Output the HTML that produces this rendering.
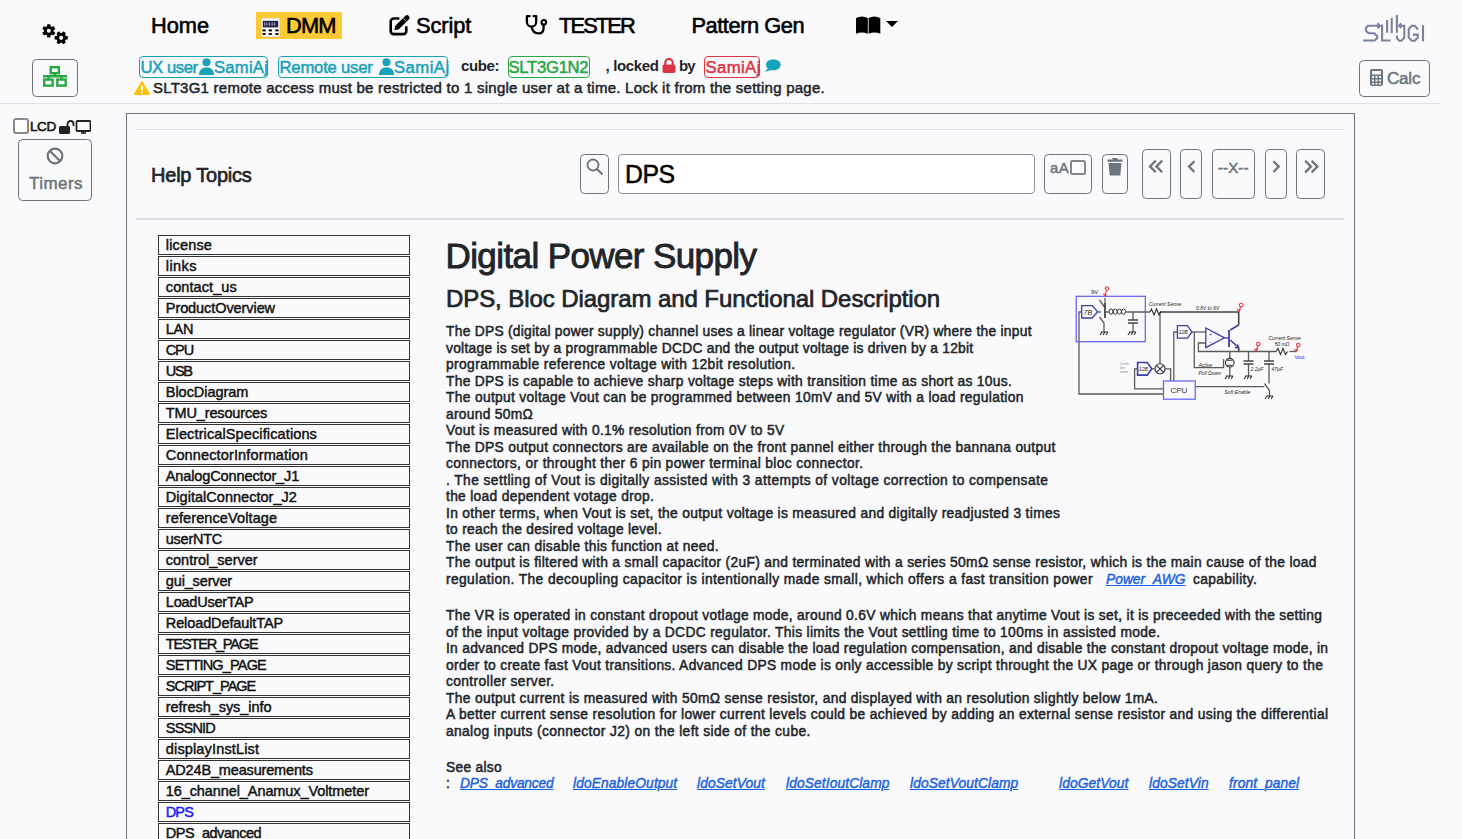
<!DOCTYPE html>
<html><head><meta charset="utf-8">
<style>
*{box-sizing:border-box}
html,body{margin:0;padding:0}
body{width:1462px;height:839px;overflow:hidden;background:#fafafc;font-family:"Liberation Sans",sans-serif;color:#212529;position:relative}
.a{position:absolute;white-space:nowrap}
.nav{font-size:21.8px;line-height:22px;color:#000;top:14.5px;-webkit-text-stroke:0.6px #000}
.md{-webkit-text-stroke:0.5px currentColor}
.bd{position:absolute;border:1px solid;border-radius:4px}
.bt{position:absolute;font-size:16.7px;line-height:20px;top:58px;white-space:nowrap;-webkit-text-stroke:0.5px currentColor}
.btn{position:absolute;border:1px solid #6c757d;border-radius:4.5px}
.hr{position:absolute;height:1px;background:#dee2e6}
#list{position:absolute;left:158px;top:235px;width:252px}
#list div{height:20px;border:1.5px solid #333;margin-bottom:1px;font-size:14.5px;line-height:17px;padding:1px 0 0 6.8px;color:#111;white-space:nowrap;letter-spacing:-0.05px;-webkit-text-stroke:0.45px currentColor}
.p{position:absolute;left:446px;font-size:13.8px;line-height:16.5px;color:#212529;white-space:nowrap;letter-spacing:0.28px;-webkit-text-stroke:0.5px currentColor}
.lk{color:#1d63dc;font-style:italic;text-decoration:underline;-webkit-text-stroke:0.45px currentColor}
.sl{position:absolute;top:775.6px;font-size:13.8px;line-height:16.5px;letter-spacing:0.1px;white-space:nowrap}
</style></head><body>
<!-- gears -->
<svg class="a" style="left:41px;top:23px" width="28" height="23" viewBox="0 0 28 23">
  <g fill="#000"><g transform="translate(7.8 7.8)"><circle r="4.9"/><rect x="-1.7" y="-6.6" width="3.4" height="13.2" rx="0.6" transform="rotate(0)"/><rect x="-1.7" y="-6.6" width="3.4" height="13.2" rx="0.6" transform="rotate(60)"/><rect x="-1.7" y="-6.6" width="3.4" height="13.2" rx="0.6" transform="rotate(120)"/></g><g transform="translate(20.2 14.8)"><circle r="4.9"/><rect x="-1.7" y="-6.6" width="3.4" height="13.2" rx="0.6" transform="rotate(30)"/><rect x="-1.7" y="-6.6" width="3.4" height="13.2" rx="0.6" transform="rotate(90)"/><rect x="-1.7" y="-6.6" width="3.4" height="13.2" rx="0.6" transform="rotate(150)"/></g></g>
  <circle cx="7.8" cy="7.8" r="2" fill="#fafafc"/>
  <circle cx="20.2" cy="14.8" r="2.1" fill="#fafafc"/>
</svg>

<!-- nav -->
<div class="a nav" style="left:151px">Home</div>
<div class="a" style="left:256px;top:12px;width:86px;height:27px;background:#fdc935"></div>
<svg class="a" style="left:261px;top:18px" width="19" height="19" viewBox="0 0 19 19">
  <rect x="0.2" y="0.2" width="18.6" height="18.6" fill="#fff" stroke="#c4c4d8" stroke-width="0.5"/>
  <rect x="1.8" y="2.8" width="15.4" height="6.6" fill="#1d1d45"/>
  <g fill="#b8b8d0"><rect x="3" y="4" width="0.6" height="4.2"/><rect x="5.6" y="4" width="0.6" height="4.2"/><rect x="8.2" y="4" width="0.6" height="4.2"/><rect x="10.8" y="4" width="0.6" height="4.2"/><rect x="13.4" y="4" width="0.6" height="4.2"/><rect x="3" y="5.8" width="12" height="0.5"/></g>
  <g fill="#000"><ellipse cx="3.1" cy="12.4" rx="1.9" ry="1.05"/><ellipse cx="9.3" cy="12.4" rx="1.9" ry="1.05"/><ellipse cx="15.9" cy="12.4" rx="1.9" ry="1.05"/>
  <ellipse cx="3.1" cy="16" rx="1.9" ry="1.05"/><ellipse cx="9.3" cy="16" rx="1.9" ry="1.05"/><ellipse cx="15.9" cy="16" rx="1.9" ry="1.05"/></g>
</svg>
<div class="a nav" style="left:286px;letter-spacing:-0.8px">DMM</div>
<svg class="a" style="left:388px;top:15px" width="23" height="22" viewBox="0 0 23 22">
  <path d="M10.3 3.5H5.7a3 3 0 0 0-3 3v9.6a3 3 0 0 0 3 3h9.6a3 3 0 0 0 3-3V12.3" fill="none" stroke="#000" stroke-width="2.6" stroke-linecap="round"/>
  <path d="M6.3 15.2l1-4.4 9.9-9.9a2.5 2.5 0 0 1 3.55 3.55l-9.9 9.9z" fill="#000"/>
  <path d="M14.9 2.9l3.6 3.6" stroke="#fafafc" stroke-width="0.6"/>
</svg>
<div class="a nav" style="left:416px;letter-spacing:-0.1px">Script</div>
<svg class="a" style="left:524px;top:15px" width="24" height="22" viewBox="0 0 24 22">
  <path d="M5.6 1.2H2.9v5.8a4.65 4.65 0 0 0 9.3 0V1.2H9.6" fill="none" stroke="#000" stroke-width="2.3" stroke-linecap="round" stroke-linejoin="round"/>
  <path d="M7.6 11.6C8.3 16.3 11.4 18.4 14.6 18.4S19.6 16.2 19.6 13V9.6" fill="none" stroke="#000" stroke-width="2.3"/>
  <circle cx="19.8" cy="7.3" r="2.3" fill="none" stroke="#000" stroke-width="2.1"/>
</svg>
<div class="a nav" style="left:559px;letter-spacing:-1.85px">TESTER</div>
<div class="a nav" style="left:691.5px;letter-spacing:-0.45px">Pattern Gen</div>
<svg class="a" style="left:856px;top:16px" width="43" height="19" viewBox="0 0 43 19">
  <path d="M0 2Q6 -1 11.8 2V17.8Q6 15.2 0 17.8z" fill="#000"/>
  <path d="M12.6 2Q18.4 -1 24.3 2V17.8Q18.4 15.2 12.6 17.8z" fill="#000"/>
  <path d="M30 5h12l-6 6z" fill="#000"/>
</svg>
<!-- logo -->
<svg class="a" style="left:1358px;top:10px" width="72" height="36" viewBox="0 0 72 36">
  <g fill="none" stroke="#7a839b" stroke-width="2.1" stroke-linejoin="miter">
    <path d="M21.2 15.8H9.9L7.9 18.2v2.5l2.9 2.5h5.5l2.9 2.9v2l-2.5 2.4H5.2"/>
    <path d="M19.5 13.3l2.4 2.5-2.4 2.5"/>
    <path d="M24.1 14.6v15.9h8.5"/>
    <path d="M29.1 10.1v12.7M33.7 7.7v15.6M38.9 5v17.8"/>
    <path d="M41.8 15.8h4.5v12l-3 3h-2l-2.4-2.5v-2.7"/>
    <path d="M43.3 13.5l-2.2 2.3 2.2 2.3"/>
    <path d="M60 19.5l-3.2-3.7h-3.1l-3 3.1v8.8l3 3.1h3l3.1-3.1v-3.1h-5.1"/>
    <path d="M65 15.2v16.2"/>
  </g>
</svg>

<!-- calc -->
<div class="btn" style="left:1359px;top:60px;width:71px;height:37px"></div>
<svg class="a" style="left:1370px;top:69px" width="13" height="17" viewBox="0 0 13 17">
  <rect x="0" y="0" width="13" height="17" rx="2" fill="#6c757d"/>
  <rect x="2" y="2" width="9" height="3.5" fill="#fafafc"/>
  <g fill="#fafafc"><rect x="2" y="7" width="2" height="2"/><rect x="5.5" y="7" width="2" height="2"/><rect x="9" y="7" width="2" height="2"/>
  <rect x="2" y="10.5" width="2" height="2"/><rect x="5.5" y="10.5" width="2" height="2"/><rect x="9" y="10.5" width="2" height="2"/>
  <rect x="2" y="14" width="2" height="1.5"/><rect x="5.5" y="14" width="2" height="1.5"/><rect x="9" y="14" width="2" height="1.5"/></g>
</svg>
<div class="a md" style="left:1387px;top:70px;font-size:17px;line-height:17px;color:#6c757d;letter-spacing:-0.2px">Calc</div>

<!-- network button -->
<div class="btn" style="left:32px;top:59px;width:46px;height:38px"></div>
<svg class="a" style="left:42px;top:66px" width="26" height="21" viewBox="0 0 26 21">
  <g fill="none" stroke="#28a745" stroke-width="2.4">
    <rect x="8.7" y="1.2" width="8.2" height="6"/>
    <path d="M12.8 7.2v3.1M1 10.3h24M6.5 10.3v3.2M19.5 10.3v3.2"/>
    <rect x="2.2" y="13.6" width="8.4" height="6"/>
    <rect x="15.3" y="13.6" width="8.4" height="6"/>
  </g>
</svg>


<!-- badges row -->
<div class="bd" style="left:139px;top:56px;width:129px;height:22px;border-color:#17a2b8"></div>
<div class="bt" style="left:140.5px;color:#17a2b8;letter-spacing:-0.45px">UX user</div>
<svg class="a" style="left:199px;top:58px" width="15" height="17" viewBox="0 0 15 17"><circle cx="7.5" cy="4.3" r="4" fill="#17a2b8"/><path d="M0 17c0-5 2.8-7.6 7.5-7.6S15 12 15 17z" fill="#17a2b8"/></svg>
<div class="bt" style="left:214px;color:#17a2b8;letter-spacing:0.2px">SamiAj</div>
<div class="bd" style="left:278px;top:56px;width:170px;height:22px;border-color:#17a2b8"></div>
<div class="bt" style="left:279.5px;color:#17a2b8;letter-spacing:-0.22px">Remote user</div>
<svg class="a" style="left:378.5px;top:58px" width="15" height="17" viewBox="0 0 15 17"><circle cx="7.5" cy="4.3" r="4" fill="#17a2b8"/><path d="M0 17c0-5 2.8-7.6 7.5-7.6S15 12 15 17z" fill="#17a2b8"/></svg>
<div class="bt" style="left:394px;color:#17a2b8;letter-spacing:0.45px">SamiAj</div>
<div class="a" style="left:461px;top:57px;font-size:15px;line-height:17px;font-weight:bold;color:#212529;letter-spacing:-0.35px">cube:</div>
<div class="bd" style="left:508px;top:56px;width:82px;height:22px;border-color:#28a745"></div>
<div class="bt" style="left:508.5px;color:#28a745;letter-spacing:-0.3px">SLT3G1N2</div>
<div class="a" style="left:605.5px;top:57px;font-size:15px;line-height:17px;font-weight:bold;color:#212529;letter-spacing:-0.35px">, locked</div>
<svg class="a" style="left:662px;top:58px" width="14" height="15" viewBox="0 0 14 15">
  <path d="M3.3 7V4.7a3.7 3.7 0 0 1 7.4 0V7" fill="none" stroke="#dc3545" stroke-width="2.2"/>
  <rect x="0.5" y="6.5" width="13" height="8.5" rx="1.8" fill="#dc3545"/>
</svg>
<div class="a" style="left:679px;top:57px;font-size:15px;line-height:17px;font-weight:bold;color:#212529;letter-spacing:-0.9px">by</div>
<div class="bd" style="left:704px;top:56px;width:56px;height:22px;border-color:#dc3545"></div>
<div class="bt" style="left:705.5px;color:#dc3545;letter-spacing:0.4px">SamiAj</div>
<svg class="a" style="left:765px;top:59px" width="16" height="14" viewBox="0 0 16 14">
  <ellipse cx="8.3" cy="5.8" rx="7.4" ry="5.6" fill="#17a2b8"/>
  <path d="M3 9l-3 4 6-2z" fill="#17a2b8"/>
</svg>
<svg class="a" style="left:134px;top:81px" width="16" height="14" viewBox="0 0 16 14">
  <path d="M8 0.8L15.3 13.2H0.7z" fill="#ffc107" stroke="#ffc107" stroke-width="1.4" stroke-linejoin="round"/>
  <rect x="7.1" y="4.5" width="1.8" height="5" fill="#fff"/><rect x="7.1" y="10.5" width="1.8" height="1.8" fill="#fff"/>
</svg>
<div class="a md" style="left:153px;top:80px;font-size:15px;line-height:16px;color:#212529;letter-spacing:0.24px">SLT3G1 remote access must be restricted to 1 single user at a time. Lock it from the setting page.</div>

<div class="hr" style="left:0;top:103px;width:1440px"></div>

<!-- sidebar -->
<div class="a" style="left:13px;top:118px;width:16px;height:16px;border:2px solid #8a8a8f;border-radius:3px;background:#fff"></div>
<div class="a" style="left:30px;top:120px;font-size:13.5px;line-height:14px;color:#111;letter-spacing:-0.4px;-webkit-text-stroke:0.55px #111">LCD</div>
<svg class="a" style="left:59px;top:120px" width="32" height="14" viewBox="0 0 32 14">
  <path d="M8.5 7V4a3 3 0 0 1 6 0v2" fill="none" stroke="#222" stroke-width="1.8"/>
  <rect x="0" y="6" width="11" height="8" rx="1.5" fill="#222"/>
  <rect x="17.5" y="1" width="14" height="10" rx="1" fill="none" stroke="#222" stroke-width="1.8"/>
  <path d="M22 13h5" stroke="#222" stroke-width="1.6"/><path d="M24.5 11v2" stroke="#222" stroke-width="1.6"/>
</svg>
<div class="btn" style="left:18px;top:139px;width:74px;height:62px"></div>
<svg class="a" style="left:46px;top:147px" width="18" height="18" viewBox="0 0 18 18">
  <circle cx="9" cy="9" r="7.3" fill="none" stroke="#6c757d" stroke-width="2.2"/>
  <path d="M4 4l10 10" stroke="#6c757d" stroke-width="2.2"/>
</svg>
<div class="a md" style="left:29px;top:174.5px;font-size:17px;line-height:17px;color:#6c757d;letter-spacing:0.45px">Timers</div>
<!-- main panel -->
<div class="a" style="left:126px;top:113px;width:1229px;height:760px;border:1px solid #6c757d;border-bottom:none"></div>
<div class="hr" style="left:136px;top:129px;width:1208px"></div>
<div class="a" style="left:151px;top:164.5px;font-size:20px;line-height:20px;color:#212529;letter-spacing:-0.22px;-webkit-text-stroke:0.65px #212529">Help Topics</div>
<div class="btn" style="left:580px;top:154px;width:29px;height:40px"></div>
<svg class="a" style="left:586px;top:158px" width="18" height="18" viewBox="0 0 18 18">
  <circle cx="7" cy="7" r="5.5" fill="none" stroke="#6c757d" stroke-width="1.8"/>
  <path d="M11 11l5.5 5.5" stroke="#6c757d" stroke-width="2"/>
</svg>
<div class="a" style="left:618px;top:154px;width:417px;height:40px;background:#fff;border:1px solid #8a8f98;border-radius:4px"></div>
<div class="a md" style="left:624.5px;top:162px;font-size:25.7px;line-height:24px;color:#000;letter-spacing:-0.5px;transform:scaleX(0.965);transform-origin:0 0">DPS</div>
<div class="btn" style="left:1044px;top:154px;width:48px;height:40px"></div>
<div class="a md" style="left:1050px;top:161px;font-size:15px;line-height:14px;color:#6c757d;letter-spacing:0.3px">aA</div>
<div class="a" style="left:1070px;top:159.5px;width:15.5px;height:15.5px;border:2px solid #85858f;border-radius:2.5px;background:#fff"></div>
<div class="btn" style="left:1102px;top:154px;width:26px;height:40px"></div>
<svg class="a" style="left:1107px;top:158px" width="16" height="18" viewBox="0 0 16 18">
  <rect x="0.5" y="1.5" width="15" height="2.3" rx="0.5" fill="#6c757d"/>
  <rect x="5.5" y="0" width="5" height="2" fill="#6c757d"/>
  <path d="M1.5 5h13l-1.2 12.5h-10.6z" fill="#6c757d"/>
</svg>
<div class="btn" style="left:1142px;top:149px;width:29px;height:50px"></div>
<div class="btn" style="left:1180px;top:149px;width:22px;height:50px"></div>
<div class="btn" style="left:1212px;top:149px;width:43px;height:50px"></div>
<div class="btn" style="left:1265px;top:149px;width:22px;height:50px"></div>
<div class="btn" style="left:1296px;top:149px;width:29px;height:50px"></div>
<svg class="a" style="left:1142px;top:149px" width="183" height="30" viewBox="0 0 183 30">
  <g fill="none" stroke="#6c757d" stroke-width="2.3" stroke-linecap="butt">
    <path d="M13.8 11.6l-5.8 5.8 5.8 5.8"/><path d="M20.2 11.6l-5.8 5.8 5.8 5.8"/>
    <path d="M52.4 12.2l-5.4 5.4 5.4 5.4"/>
    <path d="M131.4 12.2l5.4 5.4-5.4 5.4"/>
    <path d="M163.2 11.8l5.8 5.8-5.8 5.8"/><path d="M169.6 11.8l5.8 5.8-5.8 5.8"/>
  </g>
</svg>
<div class="a md" style="left:1218px;top:160px;font-size:15px;line-height:15px;color:#6c757d;letter-spacing:0.1px">--X--</div>
<div class="a" style="left:136px;top:218px;width:1208px;height:2px;background:#dee2e6"></div>

<!-- list -->
<div id="list">
<div style="letter-spacing:0.167px">license</div><div style="letter-spacing:0.4px">links</div><div style="letter-spacing:0.094px">contact_us</div><div style="letter-spacing:-0.079px">ProductOverview</div><div style="letter-spacing:-0.3px">LAN</div><div style="letter-spacing:-1.15px">CPU</div><div style="letter-spacing:-1.3px">USB</div><div style="letter-spacing:-0.04px">BlocDiagram</div><div style="letter-spacing:-0.142px">TMU_resources</div><div style="letter-spacing:0.12px">ElectricalSpecifications</div><div style="letter-spacing:0.139px">ConnectorInformation</div><div style="letter-spacing:-0.115px">AnalogConnector_J1</div><div style="letter-spacing:0.028px">DigitalConnector_J2</div><div style="letter-spacing:0.11px">referenceVoltage</div><div style="letter-spacing:-0.25px">userNTC</div><div style="letter-spacing:-0.004px">control_server</div><div style="letter-spacing:-0.15px">gui_server</div><div style="letter-spacing:-0.22px">LoadUserTAP</div><div style="letter-spacing:-0.11px">ReloadDefaultTAP</div><div style="letter-spacing:-1.17px">TESTER_PAGE</div><div style="letter-spacing:-0.832px">SETTING_PAGE</div><div style="letter-spacing:-1.0px">SCRIPT_PAGE</div><div style="letter-spacing:-0.037px">refresh_sys_info</div><div style="letter-spacing:-0.79px">SSSNID</div><div style="letter-spacing:0.15px">displayInstList</div><div style="letter-spacing:-0.162px">AD24B_measurements</div><div style="letter-spacing:-0.092px">16_channel_Anamux_Voltmeter</div><div style="color:#1a1aff;letter-spacing:-0.9px">DPS</div><div style="letter-spacing:-0.45px">DPS_advanced</div>
</div>


<!-- content -->
<div class="a" style="left:445.5px;top:237.5px;font-size:35px;line-height:36px;color:#212529;letter-spacing:-0.6px;-webkit-text-stroke:0.9px #212529">Digital Power Supply</div>
<div class="a" style="left:446px;top:287.3px;font-size:24px;line-height:24px;color:#212529;letter-spacing:-0.08px;-webkit-text-stroke:0.7px #212529">DPS, Bloc Diagram and Functional Description</div>

<!--B1-->
<div class="p" style="top:323.6px;letter-spacing:0.268px">The DPS (digital power supply) channel uses a linear voltage regulator (VR) where the input</div>
<div class="p" style="top:340.6px;letter-spacing:0.263px">voltage is set by a programmable DCDC and the output voltage is driven by a 12bit</div>
<div class="p" style="top:356.6px;letter-spacing:0.386px">programmable reference voltage with 12bit resolution.</div>
<div class="p" style="top:373.6px;letter-spacing:0.307px">The DPS is capable to achieve sharp voltage steps with transition time as short as 10us.</div>
<div class="p" style="top:389.6px;letter-spacing:0.322px">The output voltage Vout can be programmed between 10mV and 5V with a load regulation</div>
<div class="p" style="top:406.6px;letter-spacing:0.295px">around 50mΩ</div>
<div class="p" style="top:422.6px;letter-spacing:0.322px">Vout is measured with 0.1% resolution from 0V to 5V</div>
<div class="p" style="top:439.6px;letter-spacing:0.294px">The DPS output connectors are available on the front pannel either through the bannana output</div>
<div class="p" style="top:455.6px;letter-spacing:0.358px">connectors, or throught ther 6 pin power terminal bloc connector.</div>
<div class="p" style="top:472.6px;letter-spacing:0.413px">. The settling of Vout is digitally assisted with 3 attempts of voltage correction to compensate</div>
<div class="p" style="top:488.6px;letter-spacing:0.307px">the load dependent votage drop.</div>
<div class="p" style="top:505.6px;letter-spacing:0.323px">In other terms, when Vout is set, the output voltage is measured and digitally readjusted 3 times</div>
<div class="p" style="top:521.6px;letter-spacing:0.270px">to reach the desired voltage level.</div>
<div class="p" style="top:538.6px;letter-spacing:0.318px">The user can disable this function at need.</div>
<div class="p" style="top:554.6px;letter-spacing:0.325px">The output is filtered with a small capacitor (2uF) and terminated with a series 50mΩ sense resistor, which is the main cause of the load</div>
<div class="p" style="top:571.6px;letter-spacing:0.392px">regulation. The decoupling capacitor is intentionally made small, which offers a fast transition power</div>
<!--/B1-->

<div class="a" style="left:1106px;top:571.6px;font-size:13.8px;line-height:16.5px"><span class="lk">Power_AWG</span></div>
<div class="p" style="top:571.6px;left:1193px;letter-spacing:0.35px">capability.</div>

<!--B2-->
<div class="p" style="top:607.6px;letter-spacing:0.315px">The VR is operated in constant dropout votlage mode, around 0.6V which means that anytime Vout is set, it is preceeded with the setting</div>
<div class="p" style="top:624.6px;letter-spacing:0.335px">of the input voltage provided by a DCDC regulator. This limits the Vout settling time to 100ms in assisted mode.</div>
<div class="p" style="top:640.6px;letter-spacing:0.286px">In advanced DPS mode, advanced users can disable the load regulation compensation, and disable the constant dropout voltage mode, in</div>
<div class="p" style="top:657.6px;letter-spacing:0.314px">order to create fast Vout transitions. Advanced DPS mode is only accessible by script throught the UX page or through jason query to the</div>
<div class="p" style="top:673.6px;letter-spacing:0.366px">controller server.</div>
<div class="p" style="top:690.6px;letter-spacing:0.333px">The output current is measured with 50mΩ sense resistor, and displayed with an resolution slightly below 1mA.</div>
<div class="p" style="top:706.6px;letter-spacing:0.333px">A better current sense resolution for lower current levels could be achieved by adding an external sense resistor and using the differential</div>
<div class="p" style="top:723.6px;letter-spacing:0.363px">analog inputs (connector J2) on the left side of the cube.</div>
<!--/B2-->


<div class="p" style="top:759.6px;line-height:16px">See also<br>:</div>
<div class="sl lk" style="left:460px;letter-spacing:-0.2px">DPS_advanced</div>
<div class="sl lk" style="left:573px">ldoEnableOutput</div>
<div class="sl lk" style="left:697px">ldoSetVout</div>
<div class="sl lk" style="left:786px">ldoSetIoutClamp</div>
<div class="sl lk" style="left:910px">ldoSetVoutClamp</div>
<div class="sl lk" style="left:1059px">ldoGetVout</div>
<div class="sl lk" style="left:1149px">ldoSetVin</div>
<div class="sl lk" style="left:1229px">front_panel</div>

<svg class="a" style="left:1070px;top:280px" width="250" height="130" viewBox="0 0 250 130">
<g fill="none" stroke="#5b5b5b" stroke-width="1.3">
  <path d="M11.7 32H9v82h84.5"/>
  <path d="M27.6 32H31"/>
  <path d="M35 18v5"/>
  <path d="M29.5 20l5 7"/>
  <path d="M29.5 37l4.5 6v9"/>
  <path d="M36 32h1.5"/>
  <path d="M58 32h22M92 32h-2"/>
  <path d="M63 32v8M63 43v9"/>
  <path d="M90 32v51.5"/>
  <path d="M67.6 88.8h-3v20h28.9"/>
  <path d="M81.8 88.8H85"/>
  <path d="M95 88.8h5.6V101"/>
  <path d="M103.8 101V52h3.6"/>
  <path d="M122 52h13.8"/>
  <path d="M124.3 52v35.7h29.3V79"/>
  <path d="M135.8 63h-7.4v8.5h77.6"/>
  <path d="M159.8 71.5v6.7M159.8 87.2v9"/>
  <path d="M178.5 71.5v9.5M178.5 84v12"/>
  <path d="M199 71.5v9.5M199 84v19.5"/><path d="M194.5 103.5l5 7v5.5"/>
  <path d="M125.2 106.7h69"/>
  
  <path d="M219.4 71.5h7"/>
  <path d="M63 40h0"/>
</g>
<g fill="none" stroke="#444" stroke-width="1.6">
  <path d="M90 32h78.7v13"/><path d="M168.7 45l-8.5 5" stroke="#3a3a9a"/>
  <path d="M160.2 60l8.5 7.5" stroke="#3a3a9a"/><path d="M168.7 67.5v4"/>
  <path d="M58 40h10M58 43h10" stroke-width="1.3"/>
  <path d="M173.5 81h10M173.5 84h10" stroke-width="1.3"/>
  <path d="M194 81h10M194 84h10" stroke-width="1.3"/>
  <path d="M35 23v15" stroke-width="1.8"/>
</g>
<g fill="none" stroke="#333" stroke-width="1.1">
  <path d="M80 32l1.5-3 2.5 6 2.5-6 2.5 6 1.5-3"/>
  <path d="M206 71.5l2-3 2.5 6 2.5-6 2.5 6 2-3"/>
  <g stroke-width="1"><ellipse cx="41" cy="31.6" rx="2" ry="2.6"/><ellipse cx="45.2" cy="31.6" rx="2" ry="2.6"/><ellipse cx="49.4" cy="31.6" rx="2" ry="2.6"/><ellipse cx="53.6" cy="31.6" rx="2" ry="2.6"/></g><path d="M37.5 32H39M55.6 32H58"/>
  <circle cx="90" cy="88.8" r="5"/>
  <path d="M86.5 85.3l7 7M93.5 85.3l-7 7"/>
  <circle cx="159.8" cy="82.7" r="4.3"/>
  <path d="M157 80.2h5.6M157 85.2h5.6"/>
  <path d="M31 52h7M32 52l-2 3M35 52l-2 3M38 52l-2 3"/>
  <path d="M59 52h7M60 52l-2 3M63 52l-2 3M66 52l-2 3"/>
  <path d="M156 96h7M157 96l-2 3M160 96l-2 3M163 96l-2 3"/>
  <path d="M175 96h7M176 96l-2 3M179 96l-2 3M182 96l-2 3"/>
  <path d="M196 116h7M197 116l-2 3M200 116l-2 3M203 116l-2 3"/>
</g>
<g fill="none" stroke="#3e3eaa" stroke-width="1.3">
  <path d="M11.7 25.6h10.5l5.4 6.2-5.4 6.2H11.7z"/>
  <path d="M107.4 45.7h10l4.6 6.2-4.6 6.2h-10z"/>
  <path d="M67.6 82.5h9.6l4.6 6.3-4.6 6.3h-9.6z" stroke-width="1.6"/>
  <path d="M135.8 48v19.6l18.7-9.8z"/>
  <path d="M154.5 58h4.5"/>
  <path d="M159 50v17" stroke-width="1.8"/>
  <path d="M165 67.5l3.5 0.5-1-3.5" stroke-width="1.3"/>
</g>
<g fill="none" stroke="#5c5cf5" stroke-width="1.2">
  <rect x="6.2" y="16.3" width="69.1" height="45.4"/>
  <rect x="93.5" y="101" width="31.7" height="18.2"/>
</g>
<g fill="none" stroke="#ee3333" stroke-width="1.1">
  <circle cx="37" cy="8.5" r="1.8"/><path d="M36.5 10.3l-1.5 5"/><path d="M33.5 13.5l1.5 2.5 1.5-2"/>
  <circle cx="171.2" cy="25" r="1.8"/><path d="M170.8 26.8l-2 4.5"/><path d="M167.2 29l1.5 2.5 1.8-2"/>
  <circle cx="188.3" cy="64" r="1.8"/><path d="M188 65.8l-2 5"/><path d="M184.5 68.5l1.5 2.5 1.8-2"/>
  <circle cx="228.3" cy="65" r="1.8"/><path d="M228 66.8l-2 4.5"/><path d="M224.5 69l1.5 2.5 1.8-2"/>
</g>
<g font-family="Liberation Sans" font-style="italic" fill="#222" font-size="5">
  <text x="21" y="13.5" font-style="normal" font-size="6">9V</text>
  <text x="13.5" y="34.8" font-size="7">7B</text>
  <text x="108.6" y="54" font-size="5.2">12B</text>
  <text x="68.8" y="91" font-size="5.2">12B</text>
  <text x="79" y="26">Current Sense</text>
  <text x="126" y="29.5">0.8V to 6V</text>
  <text x="198.5" y="59.5" font-size="5">Current Sense</text>
  <text x="204.5" y="65.8" font-size="5">50 mΩ</text>
  <text x="128.5" y="86.5" font-size="5">Active</text>
  <text x="128.5" y="94.5" font-size="5">Pull Down</text>
  <text x="180.5" y="91" font-size="5">2.2µF</text>
  <text x="201.5" y="91" font-size="5">47µF</text>
  <text x="154.5" y="113.5" font-size="5">Soft Enable</text>
  <text x="50" y="84.5" font-size="2.6" fill="#777">Current</text>
  <text x="50" y="88.5" font-size="2.6" fill="#777">limit</text>
  <text x="50" y="92.5" font-size="2.6" fill="#777">control</text>
  <text x="224.5" y="78.5" font-size="5" font-style="normal" fill="#2a2ae0">Vout</text>
  <text x="100.5" y="113" font-size="8" font-style="normal" fill="#333">CPU</text>
</g>
<g fill="#333" font-family="Liberation Sans" font-size="5"><text x="139" y="55.5">+</text><text x="139.5" y="64">−</text></g>
</svg>

</body></html>
